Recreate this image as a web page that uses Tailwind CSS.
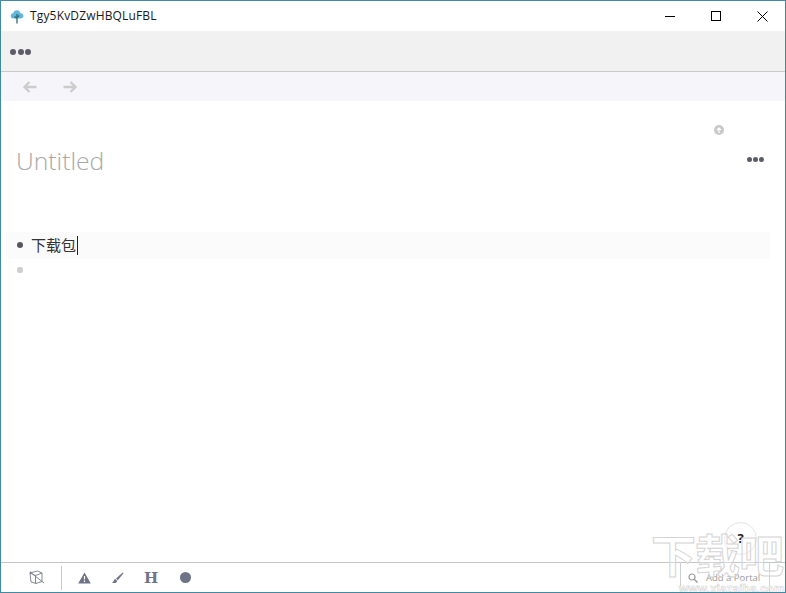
<!DOCTYPE html>
<html lang="zh-CN">
<head>
    <meta charset="UTF-8">
    <meta name="viewport" content="width=device-width, initial-scale=1.0">
    <title>Tgy5KvDZwHBQLuFBL</title>
    <script src="https://cdn.jsdelivr.net/npm/@tailwindcss/browser@4"></script>
</head>
<body class="bg-white overflow-hidden">
    <div class="relative w-[786px] h-[593px] flex flex-col border border-[#3f8ba3] bg-white overflow-hidden font-['Open_Sans','Noto_Sans_CJK_SC',sans-serif]">
        <!-- title bar -->
        <div class="h-[30px] flex items-center shrink-0 bg-white">
            <svg class="ml-[9px] w-[14px] h-[15px]" viewBox="0 0 14 15">
                <path d="M3.500 9.500C1.500 9.500 .5 8 .8 6.400 1 5 2.200 4.200 3.200 4.300 3.600 2.200 5.400 1 7.200 1.200 9 1.400 10.200 2.600 10.500 4.200 12.200 4.200 13.500 5.400 13.500 7 13.500 8.600 12.200 9.500 10.800 9.500Z" fill="#62b5dd"/>
                <path d="M7 5V14.500M7 9.500 4.500 7.500M7 8.500 9.300 6.500" stroke="#2d6a72" stroke-width="1.300" fill="none"/>
            </svg>
            <span class="ml-[6px] text-[12px] leading-none text-[#1a1a1a] tracking-[0.16px]">Tgy5KvDZwHBQLuFBL</span>
            <div class="ml-auto flex items-center h-full">
                <div class="w-[46px] h-full flex items-center justify-center">
                    <div class="w-[10px] h-px bg-black"></div>
                </div>
                <div class="w-[46px] h-full flex items-center justify-center">
                    <div class="w-[10px] h-[10px] border border-black"></div>
                </div>
                <div class="w-[46px] h-full flex items-center justify-center">
                    <svg class="w-[11px] h-[11px]" viewBox="0 0 11 11"><path d="M.5.5 10.500 10.500M10.500.5 .5 10.500" stroke="#000" stroke-width="1" fill="none"/></svg>
                </div>
            </div>
        </div>
        <!-- menu bar -->
        <div class="h-[41px] shrink-0 flex items-center gap-[1.500px] pl-[9px] pt-[1px] bg-[#f1f1f1] border-b border-[#c9c9c9]">
            <span class="w-[6px] h-[6px] rounded-full bg-[#5a5c68]"></span>
            <span class="w-[6px] h-[6px] rounded-full bg-[#5a5c68]"></span>
            <span class="w-[6px] h-[6px] rounded-full bg-[#5a5c68]"></span>
        </div>
        <!-- nav bar -->
        <div class="h-[29px] shrink-0 flex items-center gap-[26px] pl-[22px] bg-[#f6f6fa]">
            <svg class="w-[14px] h-[12px]" viewBox="0 0 14 12"><path d="M6.500 1 1.500 6 6.500 11M1.500 6H13.500" stroke="#cccccc" stroke-width="2.300" fill="none"/></svg>
            <svg class="w-[14px] h-[12px]" viewBox="0 0 14 12"><path d="M7.500 1 12.500 6 7.500 11M12.500 6H.5" stroke="#cccccc" stroke-width="2.300" fill="none"/></svg>
        </div>
        <!-- document -->
        <div class="flex-1 flex flex-col min-h-0 bg-white">
            <div class="h-[34px] shrink-0 flex items-end justify-end pr-[61px]">
                <div class="w-[10px] h-[10px] rounded-full bg-[#c9c9c9] flex items-center justify-center">
                    <svg class="w-[6px] h-[6px]" viewBox="0 0 6 6"><path d="M3 6V1M1 3 3 1 5 3" stroke="#fff" stroke-width="1.200" fill="none"/></svg>
                </div>
            </div>
            <div class="h-[43px] mt-[4px] shrink-0 flex items-center pl-[15px] pr-[21px]">
                <h1 class="mt-[2px] text-[24.700px] leading-none font-light text-[#a8a8a8]">Untitled</h1>
                <div class="ml-auto -mt-[2px] flex gap-px">
                    <span class="w-[5px] h-[5px] rounded-full bg-[#5a5c68]"></span>
                    <span class="w-[5px] h-[5px] rounded-full bg-[#5a5c68]"></span>
                    <span class="w-[5px] h-[5px] rounded-full bg-[#5a5c68]"></span>
                </div>
            </div>
            <div class="mt-[50px] mx-[4px] mr-[15px] h-[27px] shrink-0 flex items-center pl-[12px] bg-[#fbfbfb]">
                <span class="w-[6px] h-[6px] rounded-full bg-[#55565f] -mt-[1px]"></span>
                <span class="ml-[8px] -mt-[2px] text-[15px] leading-none text-[#333] font-['Noto_Sans_CJK_SC',sans-serif]">下载包</span>
                <span class="ml-px w-px h-[19px] bg-[#222]"></span>
            </div>
            <div class="h-[21px] shrink-0 flex items-center pl-[16px]">
                <span class="w-[6px] h-[6px] rounded-[2px] bg-[#cfcfcf]"></span>
            </div>
        </div>
        <!-- bottom toolbar -->
        <div class="h-[30px] shrink-0 flex items-center border-t border-[#c4c4c4] bg-white">
            <div class="w-[61px] h-[24px] flex items-center justify-center pl-[10px] border-r border-[#c9c9c9]">
                <svg class="w-[17px] h-[15px]" viewBox="0 0 17 15"><path d="M2 3 9.500 1 14 3 14 11.500 8 13.500 3 12ZM7.500 5.500 14 3M7.500 5.500V13.500M7.500 5.500 2 3M2 3 2.500 1.500M2 2 16 13" stroke="#777c88" stroke-width=".9" fill="none"/></svg>
            </div>
            <div class="flex items-center pl-[16px]">
                <svg class="w-[13px] h-[12px]" viewBox="0 0 13 12"><path d="M6.500 .5 12.800 11.500H.2Z" fill="#6f7387"/><path d="M6.500 4V7.500M6.500 8.500V10" stroke="#fff" stroke-width="1.200"/></svg>
                <svg class="ml-[20px] w-[13px] h-[12px]" viewBox="0 0 13 12"><path d="M11.800 .5 5 6.500 6.800 8.200 12.500 1.300Z" fill="#6f7387"/><path d="M4.300 7C2.500 7.300 3.300 9.800 1 10.500 2.800 11.500 6 11.300 6.200 8.800Z" fill="#6f7387"/></svg>
                <span class="ml-[20px] mt-[2px] w-[13px] text-[15px] leading-none font-bold text-[#6f7387] font-['DejaVu_Serif',serif]">H</span>
                <span class="ml-[23px] w-[11px] h-[11px] rounded-full bg-[#6f7387]"></span>
            </div>
        </div>
        <!-- help button over the page -->
        <div class="absolute left-[723px] top-[521px] w-[33px] h-[33px] rounded-full border border-[#e4e4e4] bg-white/40 flex items-center justify-center text-[13px] font-bold text-[#222]">?</div>
        <!-- add a portal, under the watermark -->
        <div class="absolute left-[679px] top-[561px] w-[90px] h-[31px] border-x border-[#cfcfcf] flex items-center gap-[8px] pl-[7px] text-[9.500px] leading-none text-[#999]">
            <svg class="w-[10px] h-[10px]" viewBox="0 0 10 10"><circle cx="4" cy="4" r="3" stroke="#999" stroke-width="1.200" fill="none"/><path d="M6.200 6.200 9.500 9.500" stroke="#999" stroke-width="1.400"/></svg>
            <span>Add a Portal</span>
        </div>
        <!-- watermark -->
        <div class="absolute left-[650px] top-[530px] text-[45px] leading-none font-bold tracking-[-1px] whitespace-nowrap text-white/30 [-webkit-text-stroke:1px_#d4d4d4] font-['Noto_Sans_CJK_SC',sans-serif]">下载吧</div>
        <div class="absolute left-[678px] top-[582px] text-[12px] leading-none font-bold text-white [-webkit-text-stroke:0.5px_#cfcfcf] font-['Liberation_Sans',sans-serif]">www.xiazaiba.com</div>
    </div>
</body>
</html>
